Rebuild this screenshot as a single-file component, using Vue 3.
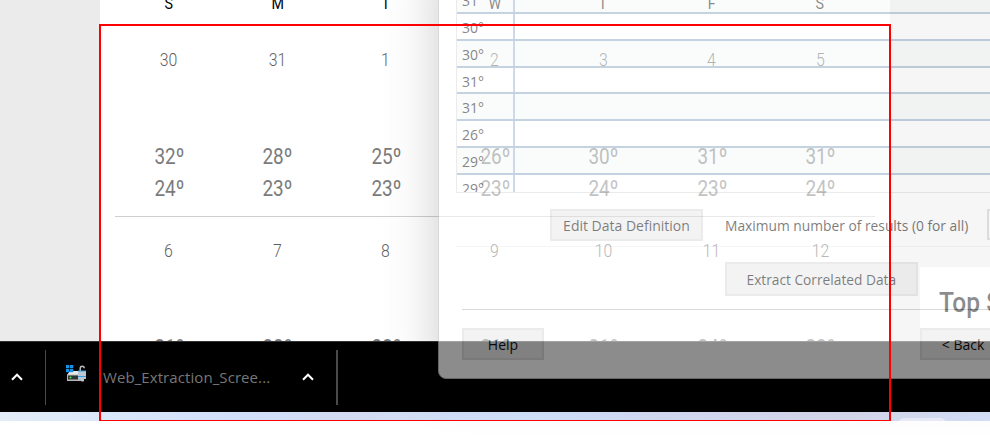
<script setup>
const weekdays = ['S', 'M', 'T', 'W', 'T', 'F', 'S']
const weeks = [
  { id: 1, days: [[30, 32, 24], [31, 28, 23], [1, 25, 23], [2, 26, 23], [3, 30, 24], [4, 31, 23], [5, 31, 24]] },
  { id: 2, days: [[6, 31, 24], [7, 28, 23], [8, 28, 23], [9, 31, 23], [10, 31, 24], [11, 34, 23], [12, 32, 24]] },
]
const rows = ['31°', '30°', '30°', '31°', '31°', '26°', '29°', '29°']
</script>

<template>
  <div class="desktop">
    <div class="page">
      <main class="calendar">
        <div class="weekdays">
          <span v-for="(d, i) in weekdays" :key="i">{{ d }}</span>
        </div>
        <section v-for="w in weeks" :key="w.id" class="week">
          <div v-for="d in w.days" :key="d[0]" class="day">
            <span class="date">{{ d[0] }}</span>
            <span class="temp">{{ d[1] }}º</span>
            <span class="temp">{{ d[2] }}º</span>
          </div>
        </section>
      </main>
      <aside class="side">
        <div class="card"><span class="card-title">Top Stories</span></div>
      </aside>
    </div>

    <div class="downloads">
      <svg class="chev first" viewBox="0 0 12 8"><path d="M1 6.7 6 1.7 11 6.7" /></svg>
      <i class="sep"></i>
      <svg class="drive" viewBox="0 0 21 17">
        <path d="M4 6h11l1 4H1z" fill="#e9e9e9" />
        <path d="M1 9.500h17v6.500H1z" fill="#b4b7b9" />
        <path d="M2 10.500h10v4H2z" fill="#303434" />
        <circle cx="4.500" cy="12.500" r="1" fill="#45ef55" />
        <path d="M0 0h3.300v3.300H0zM4 0h3.300v3.300H4zM0 4h3.300v3.300H0zM4 4h3.300v3.300H4z" fill="#1793e6" />
        <path d="M14.200 6.500V3.500q0-2.300 2-2.300t2 2" fill="none" stroke="#b8bdc2" stroke-width="1.500" />
        <path d="M12 6h8v8h-2v2q-1.500 1-3 0v-2h-3z" fill="#bac7d3" />
        <path d="M12 5.500h8v1h-8zM12 11h8v1h-8z" fill="#359fe2" />
      </svg>
      <span class="file">Web_Extraction_Scree...</span>
      <svg class="chev" viewBox="0 0 12 8"><path d="M1 6.7 6 1.7 11 6.7" /></svg>
      <i class="sep wide"></i>
    </div>
    <div class="wallpaper"><i class="pill"></i></div>

    <div class="window">
      <div class="results">
        <div v-for="(r, i) in rows" :key="i" class="row"><span class="cell">{{ r }}</span></div>
      </div>
      <div class="options">
        <button class="btn edit"><span>Edit Data Definition</span></button>
        <label class="max"><span>Maximum number of results (0 for all)</span></label>
        <i class="input"></i>
      </div>
      <div class="extract-bar">
        <button class="btn extract"><span>Extract Correlated Data</span></button>
      </div>
      <div class="footer">
        <button class="btn help"><span>Help</span></button>
        <button class="btn back"><span>&lt; Back</span></button>
      </div>
    </div>

    <div class="selection"></div>
  </div>
</template>

<style>
body { background: #fff; }
</style>

<style scoped>
* { box-sizing: border-box; }
.desktop { position: relative; width: 990px; height: 446px; overflow: hidden; background: #fff; font-family: "Open Sans", sans-serif; }
.page { display: flex; height: 341px; padding-left: 100px; background: #ebebeb; overflow: hidden; }
.calendar { width: 790px; padding: 0 15px; background: #fff; font-family: Roboto, sans-serif; }
.weekdays { display: grid; grid-template-columns: repeat(7, 1fr); height: 25px; text-align: center; font-size: 17px; line-height: 20px; color: #000; }
.weekdays span { margin-top: -7px; transform: translateX(-.5px) scaleX(.84); }
.week { display: grid; grid-template-columns: repeat(7, 1fr); height: 192px; border-bottom: 1px solid #cfcfcf; }
.week + .week { height: 191px; margin-top: -1px; }
.day { display: flex; flex-direction: column; align-items: center; color: #7b7b7b; }
.date { margin-top: 25px; height: 65px; font-size: 18px; font-weight: 300; line-height: 20px; color: #5f5f5f; transform: translateX(-.5px) scaleX(.88); }
.temp { height: 32px; font-size: 22px; line-height: 32px; transform: translateY(26px) scaleX(.86); }
.side { width: 100px; padding: 267px 0 0 30px; }
.card { width: 70px; height: 74px; padding: 18px 0 0 19px; overflow: hidden; white-space: nowrap; background: #fff; }
.card-title { display: inline-block; font: 500 28px/36px Roboto, sans-serif; color: #000; transform: scaleX(.88); transform-origin: left; }

.downloads { display: flex; align-items: center; height: 71px; background: #000; border-top: 1px solid #333; }
.chev { width: 12px; height: 8px; fill: none; stroke: #fff; stroke-width: 2; }
.chev.first { margin: 0 22px 0 11px; }
.sep { width: 1px; height: 55px; background: #4a4a4a; }
.sep.wide { width: 2px; margin-left: 22px; }
.drive { width: 21px; height: 17px; margin: -7px 16px 0 20px; }
.file { width: 168px; margin-right: 31px; font-size: 15px; letter-spacing: .08px; line-height: 20px; color: #777; white-space: nowrap; }
.wallpaper { height: 9px; padding: 6px 0 0 898px; overflow: hidden; background: linear-gradient(90deg, #e3edf8, #d2e0fb 22%, #d3dbf3 35%, #d1e1fa 53%, #d2daf4 65%, #d5d8eb 85%, #d4dff8); }
.pill { display: block; width: 48px; height: 12px; border-radius: 6px; background: #eaedf9; }

.window { position: absolute; left: 438px; top: -40px; width: 700px; height: 419px; padding: 26px 0 0 17px; border: 1px solid #bbb; border-radius: 8px; background: #fff; opacity: .55; box-shadow: 0 0 50px rgba(0, 0, 0, .36); overflow: hidden; }
.results { width: 690px; height: 206px; overflow: hidden; border: 1px solid #dcdcdc; border-top: 0; }
.row { height: 26.85px; border-bottom: 2px solid #94aecb; background: #f6fafa; }
.row:nth-child(even) { background: #fff; }
.cell { display: block; width: 58px; height: 100%; padding-left: 5px; border-right: 2px solid #a3bbd6; font-size: 14px; line-height: 28px; color: #222; }
.options { display: flex; align-items: flex-start; width: 690px; height: 54px; padding: 16px 0 0 94px; border-bottom: 1px solid #f0f0f0; }
.btn { display: flex; align-items: center; justify-content: center; height: 32px; padding: 2px 0 0; border: 2px solid #dcdcdc; background: #ebebeb; font: 14px/20px "Open Sans", sans-serif; color: #111; white-space: nowrap; }
.btn.edit { width: 153px; flex: none; }
.max { flex: none; width: 284px; padding: 7px 0 0 22px; font-size: 14px; line-height: 20px; color: #111; white-space: nowrap; }
.max span { display: inline-block; transform: scaleX(.985); transform-origin: left; }
.input { flex: none; width: 90px; height: 31px; border: 2px solid #d0d0d0; background: #fff; }
.extract-bar { width: 690px; height: 63px; margin-left: 6px; padding: 15px 0 0 263px; border-bottom: 1px solid #bbb; }
.btn.extract { width: 193px; height: 34px; }
.btn.extract span { transform: scaleX(.98); }
.footer { display: flex; justify-content: space-between; width: 554px; padding: 18px 0 0 6px; }
.btn.help { width: 82px; }
.btn.back { width: 90px; flex: none; }
.btn.back span { transform: translateX(-2px); }
.selection { position: absolute; left: 99px; top: 24px; width: 792px; height: 397px; border: 2px solid #f00; border-bottom-width: 1px; }
</style>
